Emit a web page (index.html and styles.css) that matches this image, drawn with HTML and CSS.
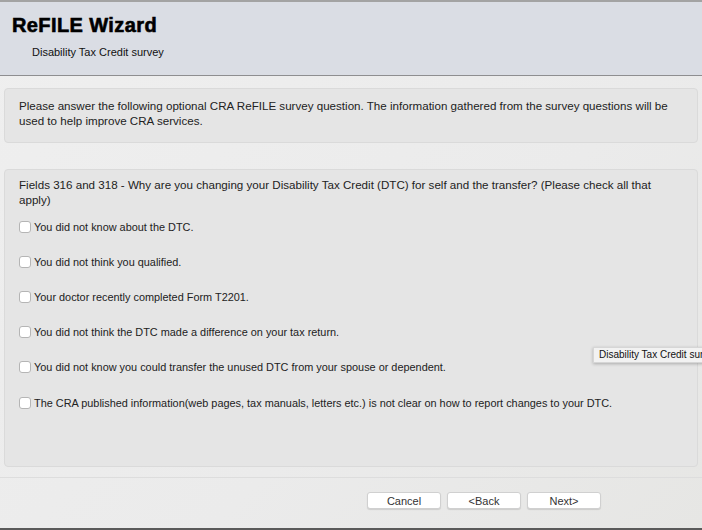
FILE: index.html
```html
<!DOCTYPE html>
<html lang="en">
<head>
    <meta charset="UTF-8">
    <title>ReFILE Wizard</title>
    <link rel="stylesheet" href="styles.css">
</head>
<body>
    <div class="window">
        <div class="header">
            <h1>ReFILE Wizard</h1>
            <div class="subtitle">Disability Tax Credit survey</div>
        </div>

        <div class="content">
            <div class="panel intro">
                Please answer the following optional CRA ReFILE survey question. The information gathered from the survey questions will be used to help improve CRA services.
            </div>

            <div class="panel question">
                <div class="question-text">Fields 316 and 318 - Why are you changing your Disability Tax Credit (DTC) for self and the transfer? (Please check all that apply)</div>
                <div class="options">
                    <label class="option"><span class="box"></span>You did not know about the DTC.</label>
                    <label class="option"><span class="box"></span>You did not think you qualified.</label>
                    <label class="option"><span class="box"></span>Your doctor recently completed Form T2201.</label>
                    <label class="option"><span class="box"></span>You did not think the DTC made a difference on your tax return.</label>
                    <label class="option"><span class="box"></span>You did not know you could transfer the unused DTC from your spouse or dependent.</label>
                    <label class="option"><span class="box"></span>The CRA published information(web pages, tax manuals, letters etc.) is not clear on how to report changes to your DTC.</label>
                </div>
            </div>
        </div>

        <div class="footer">
            <button class="btn">Cancel</button>
            <button class="btn">&lt;Back</button>
            <button class="btn">Next&gt;</button>
        </div>

        <div class="tooltip">Disability Tax Credit survey</div>
    </div>
</body>
</html>
```

FILE: styles.css
```css
* {
    margin: 0;
    padding: 0;
    box-sizing: border-box;
}

body {
    font-family: "Liberation Sans", Arial, sans-serif;
    background: #ececec;
    color: #222;
    overflow: hidden;
}

.window {
    position: relative;
    width: 702px;
    height: 530px;
    display: flex;
    flex-direction: column;
    border-top: 2px solid #a3a3a3;
    border-bottom: 2px solid #5a5a5a;
    background: linear-gradient(135deg, #efefef 0%, #ebebeb 60%, #e6e6e4 100%);
    overflow: hidden;
}

.header {
    height: 74px;
    background: #dadde4;
    border-bottom: 1px solid #8e8e90;
    padding: 11px 12px 0;
}

.header h1 {
    font-size: 20px;
    font-weight: 900;
    color: #000;
    letter-spacing: 0.4px;
    -webkit-text-stroke: 0.6px #000;
    line-height: 24px;
}

.subtitle {
    margin: 9px 0 0 20px;
    font-size: 11px;
    color: #111;
}

.content {
    padding: 12px 4px 0;
    display: flex;
    flex-direction: column;
    gap: 26px;
}

.panel {
    background: #e5e5e5;
    border: 1px solid #dadada;
    border-radius: 4px;
    width: 694px;
}

.intro {
    height: 55px;
    padding: 9px 14px;
    font-size: 11.6px;
    line-height: 15px;
}

.question {
    height: 298px;
    padding: 7px 14px;
}

.question-text {
    font-size: 11.6px;
    line-height: 15px;
}

.options {
    display: flex;
    flex-direction: column;
    margin-top: 2px;
}

.option {
    display: flex;
    align-items: center;
    gap: 3px;
    height: 35.2px;
    font-size: 10.9px;
}

.box {
    width: 12px;
    height: 12px;
    background: #fff;
    border: 1px solid #b5b5b5;
    border-radius: 3px;
}

.footer {
    margin-top: 10px;
    border-top: 1px solid #dddddd;
    flex: 1;
    display: flex;
    justify-content: flex-end;
    align-items: flex-start;
    gap: 6px;
    padding: 14px 101px 0 0;
}

.btn {
    width: 74px;
    height: 17px;
    background: #fff;
    border: 1px solid #d0d0d0;
    border-radius: 3px;
    box-shadow: 0 1px 1px rgba(0, 0, 0, 0.12);
    font-family: "Liberation Sans", Arial, sans-serif;
    font-size: 11px;
    color: #333;
}

.tooltip {
    position: absolute;
    left: 593px;
    top: 345px;
    height: 16px;
    padding: 0 5px;
    background: #f2f2f2;
    border: 1px solid #d6d6d6;
    box-shadow: 0 1px 3px rgba(0, 0, 0, 0.25);
    font-size: 10px;
    line-height: 14px;
    white-space: nowrap;
    color: #111;
}
```
